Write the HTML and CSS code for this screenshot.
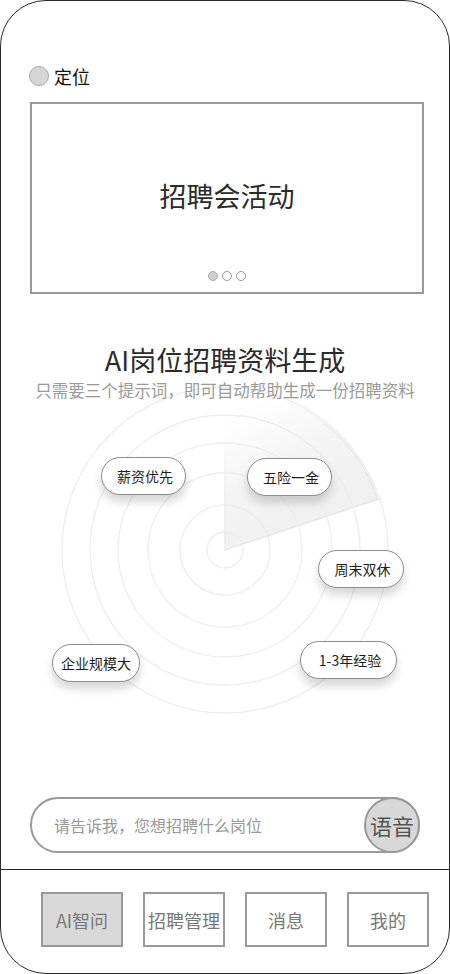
FILE: index.html
```html
<!DOCTYPE html>
<html lang="zh-CN">
<head>
<meta charset="utf-8">
<title>AI岗位招聘</title>
<link rel="stylesheet" href="styles.css">
</head>
<body>
<div class="phone">
  <div class="location">
    <span class="loc-dot"></span>
    <span class="loc-text">定位</span>
  </div>

  <div class="banner">
    <div class="banner-title">招聘会活动</div>
    <div class="dots">
      <span class="dot active"></span>
      <span class="dot"></span>
      <span class="dot"></span>
    </div>
  </div>

  <h1 class="title">AI岗位招聘资料生成</h1>
  <p class="subtitle">只需要三个提示词，即可自动帮助生成一份招聘资料</p>

  <div class="radar">
    <svg class="radar-bg" width="448" height="340" viewBox="0 0 448 340">
      <defs>
        <linearGradient id="sweep" gradientUnits="userSpaceOnUse" x1="300" y1="171" x2="224" y2="40">
          <stop offset="0" stop-color="#efefef"/>
          <stop offset="0.55" stop-color="#f4f4f4"/>
          <stop offset="1" stop-color="#ffffff"/>
        </linearGradient>
        <linearGradient id="sweepEdge" gradientUnits="userSpaceOnUse" x1="300" y1="171" x2="224" y2="40">
          <stop offset="0" stop-color="#e4e4e4"/>
          <stop offset="0.6" stop-color="#ededed"/>
          <stop offset="1" stop-color="#ffffff"/>
        </linearGradient>
      </defs>
      <path d="M224 171 L224 10 A161 161 0 0 1 376.8 120.2 Z" fill="url(#sweep)" stroke="url(#sweepEdge)" stroke-width="1.5"/>
      <g fill="none" stroke="#ededed" stroke-width="1.3">
        <circle cx="224" cy="171" r="18"/>
        <circle cx="224" cy="171" r="45"/>
        <circle cx="224" cy="171" r="77"/>
        <circle cx="224" cy="171" r="107"/>
        <circle cx="224" cy="171" r="135"/>
        <circle cx="224" cy="171" r="163"/>
      </g>
    </svg>
    <span class="pill p1">薪资优先</span>
    <span class="pill p2">五险一金</span>
    <span class="pill p3">周末双休</span>
    <span class="pill p4">企业规模大</span>
    <span class="pill p5">1-3年经验</span>
  </div>

  <div class="search">
    <span class="placeholder">请告诉我，您想招聘什么岗位</span>
    <span class="voice">语音</span>
  </div>

  <nav class="tabbar">
    <span class="tab active">AI智问</span>
    <span class="tab">招聘管理</span>
    <span class="tab">消息</span>
    <span class="tab">我的</span>
  </nav>
</div>
</body>
</html>
```

FILE: styles.css
```css
* { box-sizing: border-box; }

html, body {
  margin: 0;
  padding: 0;
  background: #fff;
}

body {
  font-family: "Noto Sans CJK SC", "Noto Sans", "Liberation Sans", sans-serif;
  color: #222;
}

.phone {
  width: 450px;
  height: 974px;
  border: 1px solid #2a2a2a;
  border-radius: 46px;
  overflow: hidden;
  display: flex;
  flex-direction: column;
  background: #fff;
}

.location {
  display: flex;
  align-items: center;
  height: 20px;
  margin-top: 65px;
  padding-left: 28px;
}

.loc-dot {
  width: 20px;
  height: 20px;
  border-radius: 50%;
  background: #d6d6d6;
  border: 1px solid #a8a8a8;
}

.loc-text {
  margin-left: 5px;
  font-size: 18px;
  line-height: 20px;
  color: #111;
}

.banner {
  margin: 16px 0 0 29px;
  width: 394px;
  height: 192px;
  border: 2px solid #999;
  display: flex;
  flex-direction: column;
  align-items: center;
}

.banner-title {
  margin-top: 76px;
  font-size: 27px;
  line-height: 32px;
  color: #2b2b2b;
}

.dots {
  display: flex;
  gap: 4px;
  margin-top: 59px;
}

.dot {
  width: 10px;
  height: 10px;
  border-radius: 50%;
  border: 1px solid #999;
  background: #fff;
}

.dot.active {
  background: #cfcfcf;
  border-color: #aaa;
}

.title {
  margin: 48px 0 0;
  text-align: center;
  font-size: 27px;
  font-weight: 400;
  line-height: 36px;
  color: #2b2b2b;
}

.subtitle {
  position: relative;
  z-index: 1;
  margin: 1px 0 0;
  text-align: center;
  font-size: 16.5px;
  line-height: 22px;
  color: #9a9a9a;
}

.radar {
  position: relative;
  height: 340px;
  margin-top: -22px;
}

.radar-bg {
  display: block;
}

.pill {
  position: absolute;
  height: 38px;
  display: flex;
  align-items: center;
  justify-content: center;
  border: 1px solid #8c8c8c;
  border-radius: 19px;
  background: #fff;
  font-size: 14px;
  color: #1e1e1e;
  box-shadow: 0 7px 10px rgba(0, 0, 0, 0.16);
  padding-left: 3px;
}

.p1 { left: 100px; top: 78px; width: 85px; }
.p2 { left: 246px; top: 79px; width: 85px; }
.p3 { left: 317px; top: 171px; width: 86px; }
.p4 { left: 51px;  top: 265px; width: 88px; padding-left: 0; }
.p5 { left: 299px; top: 262px; width: 97px; }

.search {
  margin: 78px 0 0 29px;
  width: 390px;
  height: 56px;
  border: 2px solid #999;
  border-radius: 28px;
  display: flex;
  align-items: center;
}

.placeholder {
  flex: 1;
  padding-left: 22px;
  font-size: 16px;
  color: #999;
}

.voice {
  width: 56px;
  height: 56px;
  margin: -2px -2px -2px 0;
  border-radius: 50%;
  border: 2px solid #999;
  background: #d8d8d8;
  display: flex;
  align-items: center;
  justify-content: center;
  font-size: 22px;
  color: #555;
}

.tabbar {
  margin-top: 16px;
  border-top: 1px solid #2a2a2a;
  padding: 22px 0 0 40px;
  display: flex;
  gap: 20px;
}

.tab {
  width: 82px;
  height: 55px;
  border: 2px solid #999;
  display: flex;
  align-items: center;
  justify-content: center;
  font-size: 18px;
  color: #777;
  background: #fff;
}

.tab.active {
  background: #d9d9d9;
}
```
